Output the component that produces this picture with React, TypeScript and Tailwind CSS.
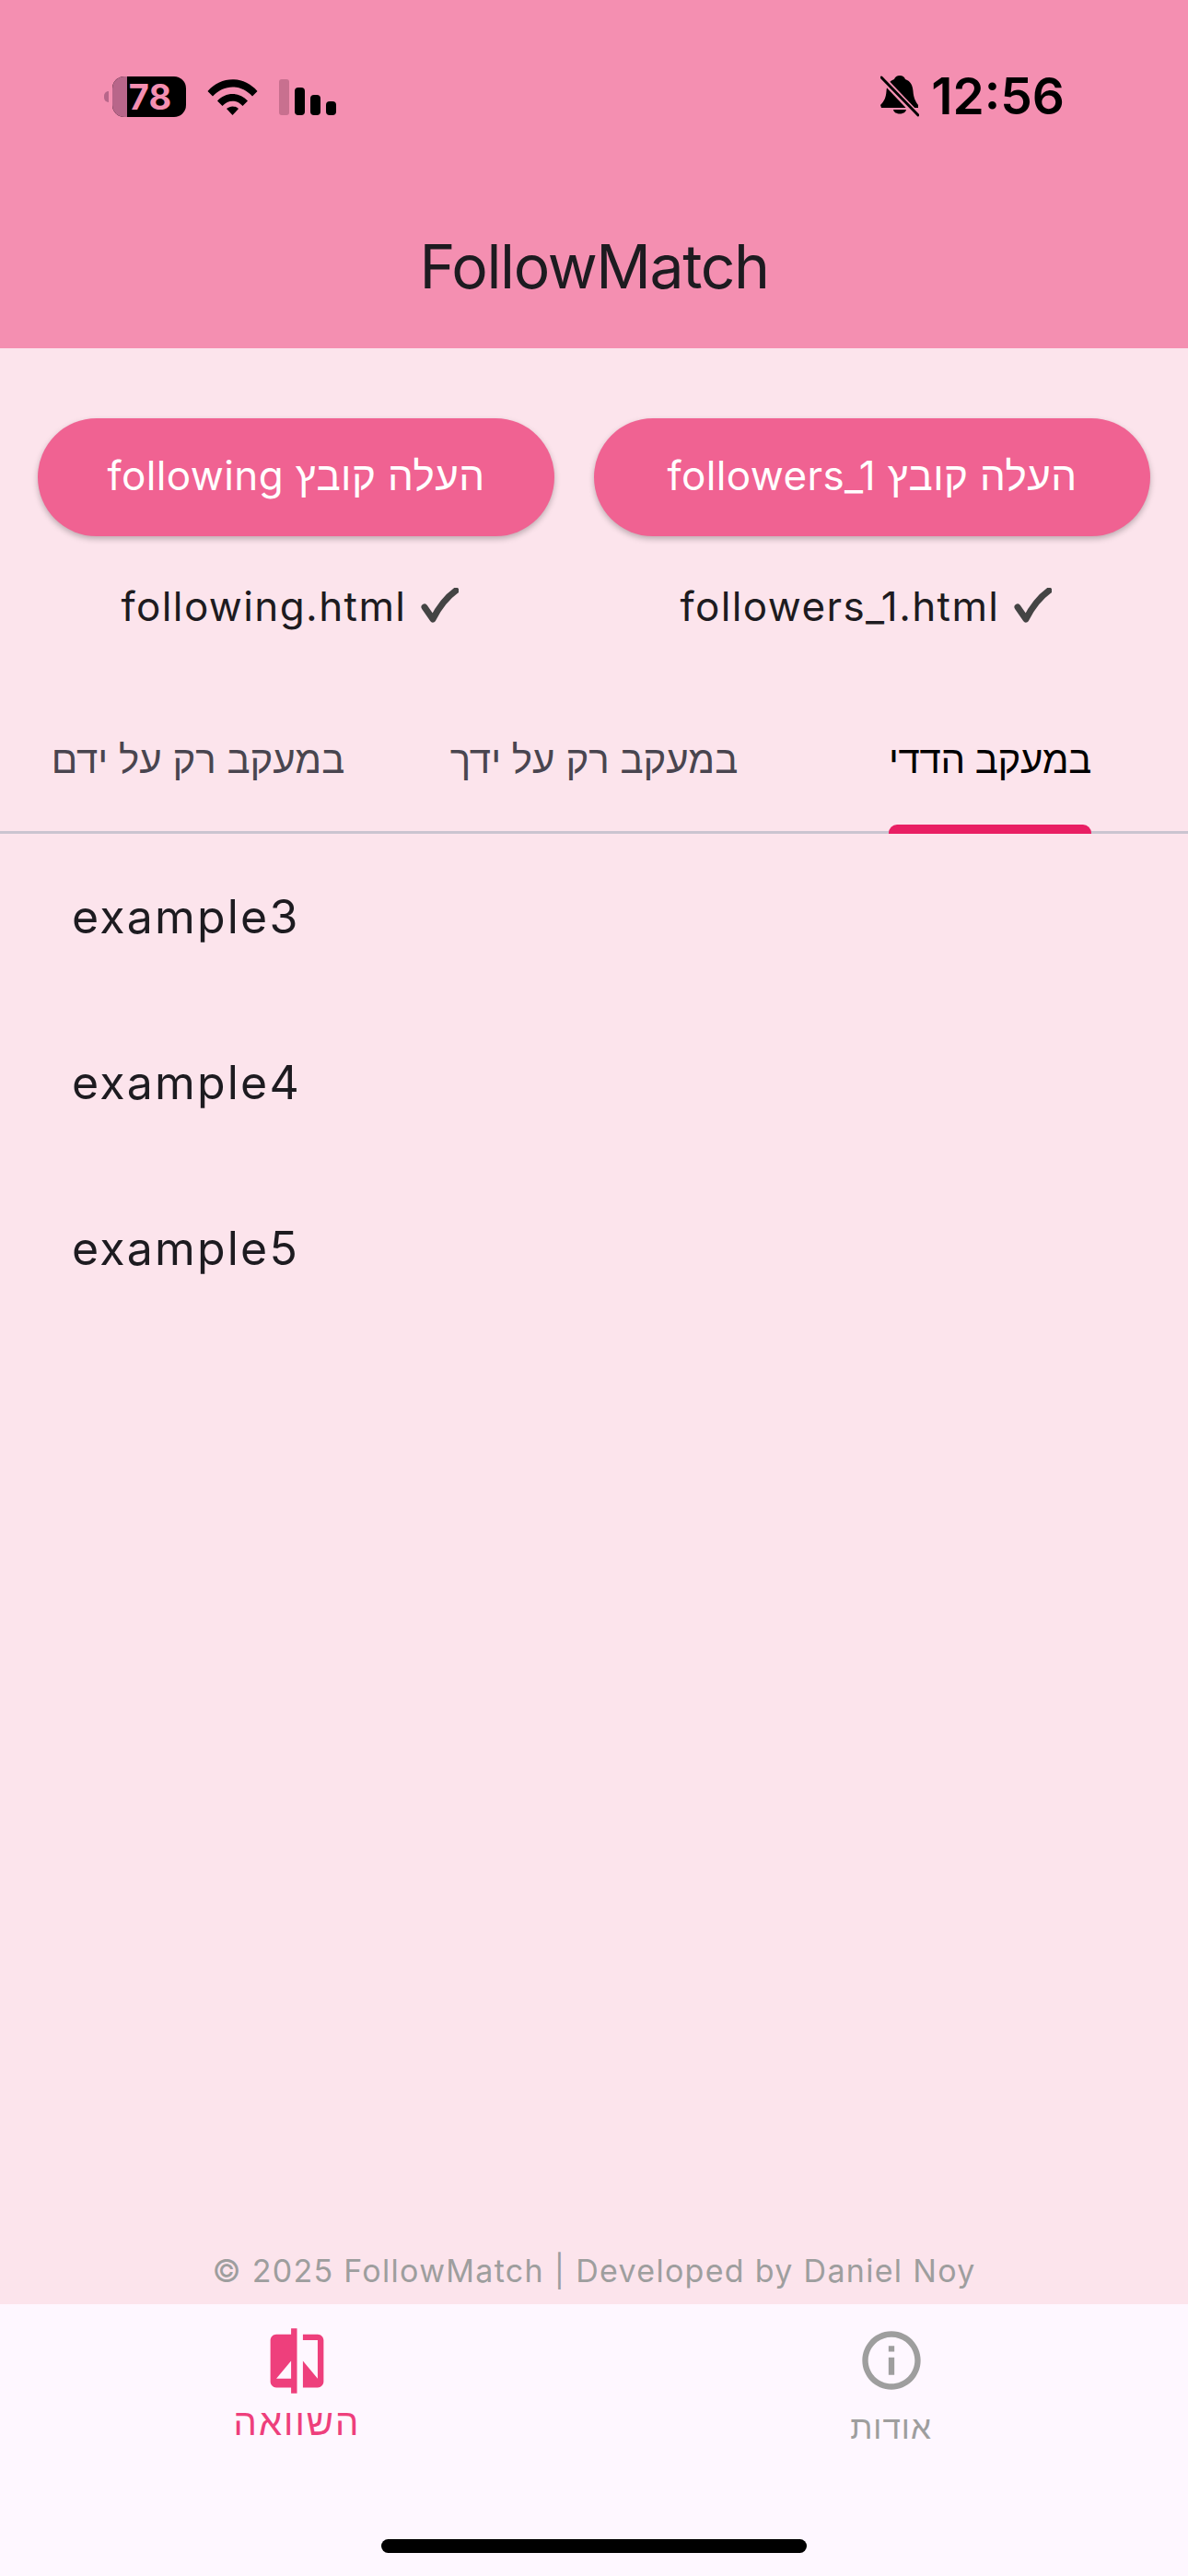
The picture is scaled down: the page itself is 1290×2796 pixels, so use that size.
const base = "font-['Inter','Roboto','Liberation_Sans',sans-serif]";

function Battery() {
  return (
    <div className="flex items-center">
      <div className="w-[5px] h-[12px] rounded-l-full bg-[#b8668a]" />
      <div className="ml-[4px] w-[80px] h-[44px] rounded-[13px] overflow-hidden flex bg-black relative">
        <div className="w-[16px] h-full bg-[#b8668a]" />
        <span className="flex-1 text-center pr-[14px] text-[#f48fb1] text-[38px] leading-[44px] font-bold">78</span>
      </div>
    </div>
  );
}

function Wifi() {
  return (
    <svg width="55" height="40" viewBox="0 0 55 40" fill="none">
      <path d="M0.5 14 C15 -3 40 -3 54.5 14 L49 19.5 C37 6 18 6 6 19.5 Z" fill="#000" />
      <path d="M11 24.5 C20 14.5 35 14.5 44 24.5 L38.5 30 C32 23 23 23 16.5 30 Z" fill="#000" />
      <path d="M21 33 C25 29.5 30 29.5 34 33 L27.5 40 Z" fill="#000" />
    </svg>
  );
}

function Signal() {
  return (
    <div className="flex items-end gap-[6px] h-[40px]">
      <div className="w-[11px] h-[39px] rounded-[3px] bg-[#c8708f]" />
      <div className="w-[11px] h-[30px] rounded-[4px] bg-black" />
      <div className="w-[11px] h-[22px] rounded-[4px] bg-black" />
      <div className="w-[11px] h-[15px] rounded-[4px] bg-black" />
    </div>
  );
}

function BellOff() {
  return (
    <svg width="42" height="45" viewBox="0 0 42 45">
      <path d="M21 0 C24 0 26 1.500 27 4 C33 6 35 11 35.500 17 C36 24 38 28 41 32 L41 35 L1 35 L0 32 C4 28 6 24 6.500 17 C7 11 9 6 15 4 C16 1.500 18 0 21 0 Z" fill="#000" />
      <path d="M14 37 H28 C27 43 15 43 14 37 Z" fill="#000" />
      <path d="M1 2 L41 44" stroke="#f48fb1" strokeWidth="7" />
      <path d="M1 2 L41 43" stroke="#000" strokeWidth="3" strokeLinecap="round" />
    </svg>
  );
}

function StatusBar() {
  return (
    <div className="flex items-center justify-between pl-[113px] pr-[134px] pt-[82px] h-[127px]">
      <div className="flex items-center gap-[23px]">
        <Battery />
        <Wifi />
        <Signal />
      </div>
      <div className="flex items-center gap-[13px]">
        <BellOff />
        <span className="text-[55px] leading-[45px] font-semibold text-black">12:56</span>
      </div>
    </div>
  );
}

function Check() {
  return (
    <svg width="42" height="40" viewBox="0 0 42 40" fill="none" stroke="#444" strokeLinecap="round" strokeLinejoin="round">
      <path d="M5 21 L14 34 C20 22 28 11 39 3" strokeWidth="7" />
    </svg>
  );
}

function UploadColumn({ width, label, file }: { width: string; label: string; file: string }) {
  return (
    <div className={`flex flex-col items-center ${width}`}>
      <div className="w-full h-[128px] pb-[4px] rounded-full bg-[#f06292] shadow-[0_3px_6px_rgba(0,0,0,0.25)] flex items-center justify-center text-white text-[44px] tracking-[0.4px]">
        <span dir="rtl">{label}</span>
      </div>
      <div dir="ltr" className="mt-[38px] h-[75px] flex items-center gap-[15px] pr-[13px] text-[#1d1b20] text-[44px] tracking-[1.4px]">
        <span>{file}</span>
        <Check />
      </div>
    </div>
  );
}

function Tab({ label, active }: { label: string; active?: boolean }) {
  return (
    <div className="relative flex-1 flex justify-center pt-[52px]">
      <div className="relative h-[106px] flex flex-col items-center">
        <span className={`text-[42px] leading-[56px] ${active ? "text-black font-medium tracking-[-0.3px]" : "text-[#49454f]"}`}>{label}</span>
        {active && <div className="absolute left-0 right-0 bottom-[-3px] h-[10px] rounded-t-[9px] bg-[#e91e63]" />}
      </div>
    </div>
  );
}

export default function App() {
  return (
    <div className={`w-[1290px] h-[2796px] flex flex-col bg-[#fce4ec] ${base}`}>
      <header className="h-[378px] bg-[#f48fb1] flex flex-col">
        <StatusBar />
        <div className="mt-[126px] text-center text-[66px] leading-[72px] tracking-[-1.4px] text-[#1d1b20]">FollowMatch</div>
      </header>

      <main className="flex-1 flex flex-col">
        <div dir="rtl" className="flex justify-between pt-[76px] px-[41px]">
          <UploadColumn width="w-[604px]" label="העלה קובץ followers_1" file="followers_1.html" />
          <UploadColumn width="w-[561px]" label="העלה קובץ following" file="following.html" />
        </div>

        <div dir="rtl" className="mt-[49px] flex border-b-[3px] border-[#cac4d0]">
          <Tab label="במעקב הדדי" active />
          <Tab label="במעקב רק על ידך" />
          <Tab label="במעקב רק על ידם" />
        </div>

        <ul className="flex-1">
          {["example3", "example4", "example5"].map((name) => (
            <li key={name} className="h-[180px] pl-[78px] flex items-center text-[50px] text-[#1d1b20] tracking-[2.2px]">
              {name}
            </li>
          ))}
        </ul>

        <div className="h-[72px] pb-[2px] flex items-center justify-center text-[34px] text-[#9e9e9e] tracking-[1.3px]">
          © 2025 FollowMatch | Developed by Daniel Noy
        </div>
      </main>

      <nav className="h-[295px] bg-[#fef7ff] flex flex-col">
        <div className="flex">
          <div className="w-[645px] flex flex-col items-center pt-[23px]">
            <svg width="77" height="77" viewBox="0 0 24 24" fill="#ee3f7c">
              <path d="M10 3H5c-1.100 0-2 .9-2 2v14c0 1.100.9 2 2 2h5v2h2V1h-2v2zm0 15H5l5-6v6zm9-15h-5v2h5v13l-5-6v9h5c1.100 0 2-.9 2-2V5c0-1.100-.9-2-2-2z" />
            </svg>
            <span className="text-[40px] leading-[48px] mt-[4px] text-[#ee3f7c] tracking-[2px]">השוואה</span>
          </div>
          <div className="w-[645px] flex flex-col items-center pt-[23px]">
            <svg width="76" height="76" viewBox="0 0 24 24" fill="#9e9e9e">
              <path d="M11 7h2v2h-2zm0 4h2v6h-2zm1-9C6.480 2 2 6.480 2 12s4.480 10 10 10 10-4.480 10-10S17.520 2 12 2zm0 18c-4.410 0-8-3.590-8-8s3.590-8 8-8 8 3.590 8 8-3.590 8-8 8z" />
            </svg>
            <span className="text-[35px] leading-[52px] mt-[8px] text-[#9e9e9e] tracking-[1px]">אודות</span>
          </div>
        </div>
        <div className="mt-auto mb-[25px] mx-auto w-[462px] h-[15px] rounded-full bg-black" />
      </nav>
    </div>
  );
}
